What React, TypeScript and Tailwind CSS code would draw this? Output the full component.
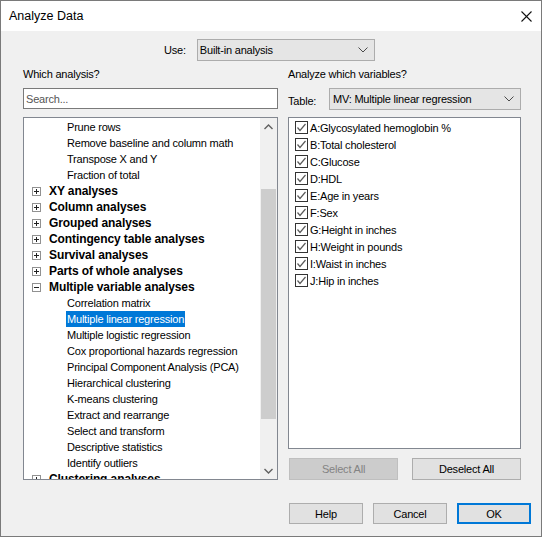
import React from "react";

const font = { fontFamily: '"Liberation Sans", Arial, sans-serif' };

function Chevron({ up = false }: { up?: boolean }) {
  return (
    <svg width="9" height="6" viewBox="0 0 9 6" className="block">
      <polyline
        points={up ? "0.5,5 4.5,1 8.5,5" : "0.5,1 4.5,5 8.5,1"}
        fill="none"
        stroke="#606060"
        strokeWidth="1.4"
      />
    </svg>
  );
}

function DropArrow() {
  return (
    <svg width="10" height="6" viewBox="0 0 10 6" className="block">
      <polyline points="0.5,0.5 5,5 9.5,0.5" fill="none" stroke="#4a4a4a" strokeWidth="1" />
    </svg>
  );
}

function Expander({ open }: { open: boolean }) {
  return (
    <span className="mr-[8px] ml-[8px] flex h-[9px] w-[9px] items-center justify-center border border-[#919191] bg-white">
      <svg width="7" height="7" viewBox="0 0 7 7" className="block">
        <line x1="1" y1="3.5" x2="6" y2="3.5" stroke="#222" strokeWidth="1" />
        {!open && <line x1="3.5" y1="1" x2="3.5" y2="6" stroke="#222" strokeWidth="1" />}
      </svg>
    </span>
  );
}

function Checkbox() {
  return (
    <span className="mr-[2px] flex h-[13px] w-[13px] shrink-0 items-center justify-center border border-[#333] bg-white">
      <svg width="11" height="11" viewBox="0 0 11 11" className="block">
        <polyline points="1.5,5.5 4,8.5 9.5,2" fill="none" stroke="#5a5a5a" strokeWidth="1.2" />
      </svg>
    </span>
  );
}

type Row = { label: string; group?: boolean; open?: boolean; selected?: boolean };

const treeRows: Row[] = [
  { label: "Prune rows" },
  { label: "Remove baseline and column math" },
  { label: "Transpose X and Y" },
  { label: "Fraction of total" },
  { label: "XY analyses", group: true },
  { label: "Column analyses", group: true },
  { label: "Grouped analyses", group: true },
  { label: "Contingency table analyses", group: true },
  { label: "Survival analyses", group: true },
  { label: "Parts of whole analyses", group: true },
  { label: "Multiple variable analyses", group: true, open: true },
  { label: "Correlation matrix" },
  { label: "Multiple linear regression", selected: true },
  { label: "Multiple logistic regression" },
  { label: "Cox proportional hazards regression" },
  { label: "Principal Component Analysis (PCA)" },
  { label: "Hierarchical clustering" },
  { label: "K-means clustering" },
  { label: "Extract and rearrange" },
  { label: "Select and transform" },
  { label: "Descriptive statistics" },
  { label: "Identify outliers" },
  { label: "Clustering analyses", group: true },
];

const variables = [
  "A:Glycosylated hemoglobin %",
  "B:Total cholesterol",
  "C:Glucose",
  "D:HDL",
  "E:Age in years",
  "F:Sex",
  "G:Height in inches",
  "H:Weight in pounds",
  "I:Waist in inches",
  "J:Hip in inches",
];

export default function App() {
  return (
    <div
      style={font}
      className="flex h-[537px] w-[542px] flex-col border border-[#7a7a7a] bg-[#f0f0f0] text-[11px] leading-[14px] tracking-[-0.2px] text-black"
    >
      {/* Title bar */}
      <div className="flex h-[30px] shrink-0 items-center justify-between bg-white pr-[9px] pl-[8px]">
        <span className="text-[12.5px] tracking-normal">Analyze Data</span>
        <svg width="11" height="11" viewBox="0 0 11 11" className="block">
          <line x1="0.5" y1="0.5" x2="10.5" y2="10.5" stroke="#111" strokeWidth="1.1" />
          <line x1="10.5" y1="0.5" x2="0.5" y2="10.5" stroke="#111" strokeWidth="1.1" />
        </svg>
      </div>

      {/* Use row */}
      <div className="mt-[8px] flex h-[22px] items-center pl-[163px]">
        <span className="mr-[11px]">Use:</span>
        <div className="flex h-[22px] w-[178px] items-center justify-between border border-[#acacac] bg-[#e5e5e5] pr-[6px] pl-[2px]">
          <span>Built-in analysis</span>
          <DropArrow />
        </div>
      </div>

      {/* Columns */}
      <div className="mt-[6px] flex pl-[22px]">
        {/* Left */}
        <div className="flex w-[255px] flex-col">
          <div className="h-[14px]">Which analysis?</div>
          <div className="mt-[7px] flex h-[21px] items-center border border-[#7a7a7a] bg-white pl-[2px] text-[#555]">
            Search...
          </div>
          <div className="mt-[8px] flex h-[363px] border border-[#828790] bg-white">
            <div className="flex-1 overflow-hidden pt-[1px]">
              {treeRows.map((r) => (
                <div key={r.label} className="flex h-[16px] items-center whitespace-nowrap">
                  {r.group ? (
                    <>
                      <Expander open={!!r.open} />
                      <span className="text-[12px] font-bold tracking-[-0.1px]">{r.label}</span>
                    </>
                  ) : (
                    <span
                      className={`ml-[42px] px-[1px] leading-[16px] ${
                        r.selected ? "bg-[#0078d7] text-white" : ""
                      }`}
                    >
                      {r.label}
                    </span>
                  )}
                </div>
              ))}
            </div>
            <div className="flex w-[17px] shrink-0 flex-col bg-[#f0f0f0]">
              <div className="flex h-[17px] items-center justify-center">
                <Chevron up />
              </div>
              <div className="h-[54px]" />
              <div className="mx-[1px] h-[230px] bg-[#cdcdcd]" />
              <div className="flex-1" />
              <div className="flex h-[17px] items-center justify-center">
                <Chevron />
              </div>
            </div>
          </div>
        </div>

        {/* Right */}
        <div className="ml-[10px] flex w-[233px] flex-col">
          <div className="h-[14px]">Analyze which variables?</div>
          <div className="mt-[7px] flex h-[22px] items-center">
            <span className="mt-[3px] w-[41px]">Table:</span>
            <div className="flex h-[22px] flex-1 items-center justify-between border border-[#acacac] bg-[#e5e5e5] pr-[6px] pl-[3px]">
              <span>MV: Multiple linear regression</span>
              <DropArrow />
            </div>
          </div>
          <div className="mt-[7px] h-[332px] border border-[#828790] bg-white pt-[1px] pl-[6px]">
            {variables.map((v) => (
              <div key={v} className="flex h-[17px] items-center whitespace-nowrap">
                <Checkbox />
                <span>{v}</span>
              </div>
            ))}
          </div>
          <div className="mt-[9px] flex h-[22px] justify-between pl-[1px]">
            <div className="flex w-[109px] items-center justify-center border border-[#bfbfbf] bg-[#cccccc] text-[#838383]">
              Select All
            </div>
            <div className="flex w-[109px] items-center justify-center border border-[#adadad] bg-[#e1e1e1]">
              Deselect All
            </div>
          </div>
        </div>
      </div>

      {/* Bottom buttons */}
      <div className="mt-[23px] flex justify-end gap-[10px] pr-[10px]">
        <div className="flex h-[21px] w-[74px] items-center justify-center border border-[#adadad] bg-[#e1e1e1]">
          Help
        </div>
        <div className="flex h-[21px] w-[74px] items-center justify-center border border-[#adadad] bg-[#e1e1e1]">
          Cancel
        </div>
        <div className="flex h-[21px] w-[74px] items-center justify-center border-2 border-[#0078d7] bg-[#e1e1e1]">
          OK
        </div>
      </div>
    </div>
  );
}
